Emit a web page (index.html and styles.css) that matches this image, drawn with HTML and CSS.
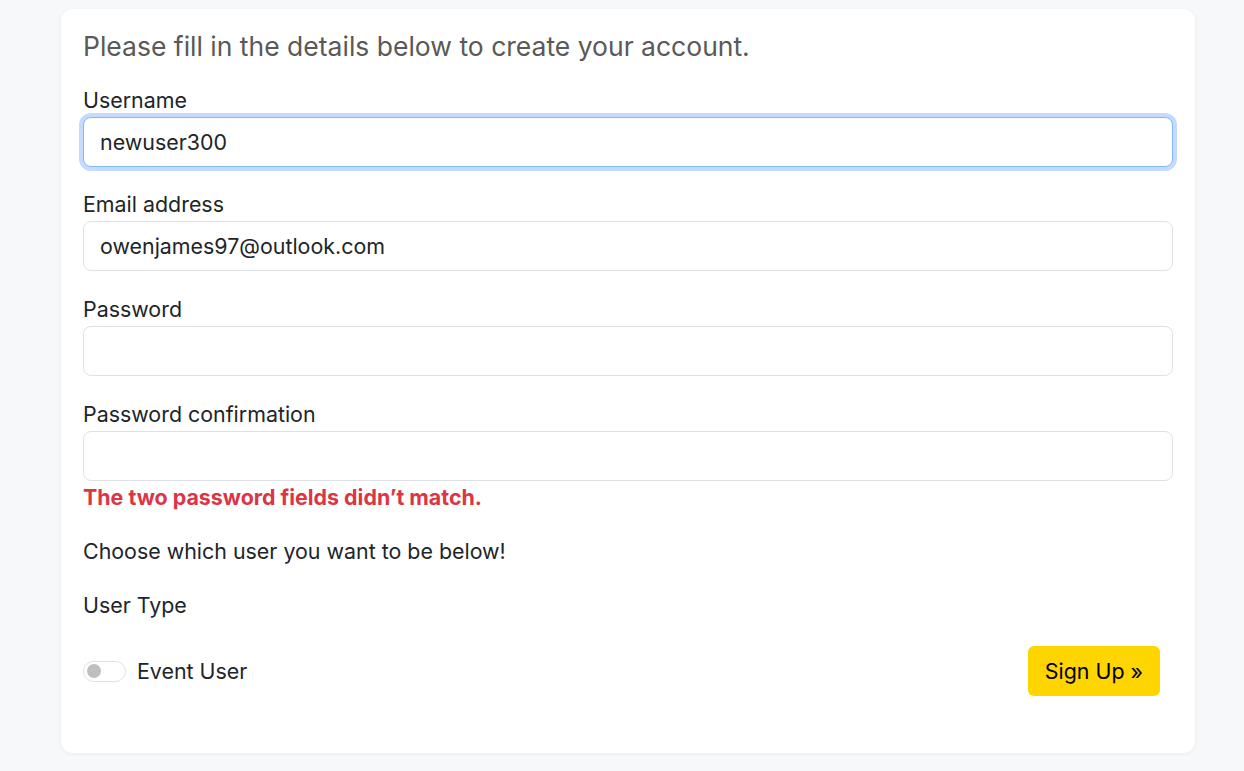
FILE: index.html
```html
<!DOCTYPE html>
<html lang="en">
<head>
<meta charset="utf-8">
<title>Sign Up</title>
<link rel="stylesheet" href="styles.css">
</head>
<body>
<main class="card">
  <h2 class="lead">Please fill in the details below to create your account.</h2>
  <form class="form">
    <div class="field">
      <label class="label" for="username">Username</label>
      <input class="input input-focus" id="username" type="text" value="newuser300">
    </div>
    <div class="field">
      <label class="label" for="email">Email address</label>
      <input class="input" id="email" type="email" value="owenjames97@outlook.com">
    </div>
    <div class="field">
      <label class="label" for="pw1">Password</label>
      <input class="input" id="pw1" type="password">
    </div>
    <div class="field field-last">
      <label class="label" for="pw2">Password confirmation</label>
      <input class="input" id="pw2" type="password">
      <div class="error">The two password fields didn’t match.</div>
    </div>
    <p class="text">Choose which user you want to be below!</p>
    <p class="text">User Type</p>
    <div class="actions">
      <label class="switch">
        <span class="track"><span class="knob"></span></span>
        <span class="switch-label">Event User</span>
      </label>
      <button type="button" class="btn">Sign Up »</button>
    </div>
  </form>
</main>
</body>
</html>
```
FILE: styles.css
```css
* { box-sizing: border-box; }
html, body {
  margin: 0;
  padding: 0;
  background: #f7f8fa;
  font-family: Inter, "Noto Sans", sans-serif;
  color: #212529;
}
body { padding: 9px 49px 19px 61px; }
.card {
  background: #fff;
  border-radius: 12px;
  box-shadow: 0 1px 4px rgba(0,0,0,0.06);
  padding: 21px 22px 57px 22px;
}
.lead {
  margin: 0 0 25px;
  font-size: 26.5px;
  line-height: 32px;
  font-weight: 400;
  color: #595959;
}
.form { display: flex; flex-direction: column; }
.field { display: flex; flex-direction: column; margin-bottom: 25px; }
.field:first-child { margin-bottom: 24px; }
.field-last { margin-bottom: 0; }
.label {
  font-size: 21.4px;
  line-height: 26px;
  margin-bottom: 4px;
}
.input {
  height: 50px;
  border: 1px solid #dee2e6;
  border-radius: 8px;
  padding: 0 16px;
  font-family: inherit;
  font-size: 21.4px;
  color: #212529;
  background: #fff;
  outline: none;
}
.input-focus {
  border-color: #86b7fe;
  box-shadow: 0 0 0 4px rgba(13,110,253,0.25);
}
.error {
  margin-top: 3px;
  font-size: 21.4px;
  line-height: 26px;
  font-weight: 700;
  color: #dc3545;
}
.text {
  margin: 28px 0 0;
  font-size: 21.4px;
  line-height: 26px;
}
.actions {
  margin-top: 28px;
  display: flex;
  align-items: center;
  justify-content: space-between;
  padding-right: 13px;
}
.switch { display: flex; align-items: center; gap: 11px; font-size: 21.4px; }
.track {
  width: 43px;
  height: 21px;
  border: 1px solid #dee2e6;
  border-radius: 11px;
  display: flex;
  align-items: center;
  padding-left: 3px;
}
.knob {
  width: 14px;
  height: 14px;
  border-radius: 50%;
  background: #bfbfbf;
}
.btn {
  height: 50px;
  padding: 0 17px;
  border: none;
  border-radius: 6px;
  background: #ffd500;
  color: #000;
  font-family: inherit;
  font-size: 21.4px;
}
```
